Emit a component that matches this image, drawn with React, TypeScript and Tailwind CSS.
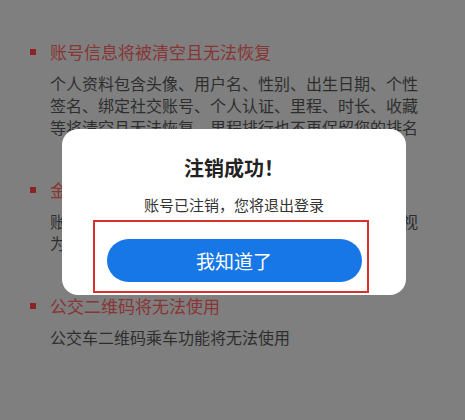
import React from "react";

type Section = {
  title: string;
  lines: string[];
};

const sections: Section[] = [
  {
    title: "账号信息将被清空且无法恢复",
    lines: [
      "个人资料包含头像、用户名、性别、出生日期、个性",
      "签名、绑定社交账号、个人认证、里程、时长、收藏",
      "等将清空且无法恢复，里程排行也不再保留您的排名",
    ],
  },
  {
    title: "金币等虚拟资产将被清空",
    lines: [
      "账号的余额、金币、优惠券等虚拟资产将被清空，视",
      "为您自动放弃",
    ],
  },
  {
    title: "公交二维码将无法使用",
    lines: ["公交车二维码乘车功能将无法使用"],
  },
];

function NoticeSection({ section }: { section: Section }) {
  return (
    <div className="flex flex-col">
      <div className="flex items-center">
        <span className="w-[6px] h-[6px] bg-[#8c2424] ml-[30px] mr-[14px]" />
        <span className="text-[17px] leading-[24px] text-[#873535]">
          {section.title}
        </span>
      </div>
      <div className="mt-[8px] pl-[50px] text-[16px] leading-[22px] text-[#2e2e2e]">
        {section.lines.map((line) => (
          <div key={line} className="whitespace-nowrap">
            {line}
          </div>
        ))}
      </div>
    </div>
  );
}

export default function App() {
  return (
    <div className="relative w-[465px] h-[420px] overflow-hidden bg-[#7f7f7f] font-['Noto_Sans_CJK_SC','Noto_Sans',sans-serif]">
      <div className="flex flex-col gap-[40px] pt-[40px]">
        {sections.map((s) => (
          <NoticeSection key={s.title} section={s} />
        ))}
      </div>

      {/* modal */}
      <div className="absolute left-[62px] top-[129px] w-[344px] h-[166px] rounded-[16px] bg-white flex flex-col items-center pt-[25px]">
        <div className="text-[20px] leading-[28px] font-bold text-[#222222]">
          注销成功！
        </div>
        <div className="mt-[12px] text-[15px] leading-[22px] text-[#333333]">
          账号已注销，您将退出登录
        </div>
        <button className="mt-[23px] w-[255px] h-[43px] rounded-full bg-[#1877e6] text-white text-[19px] leading-none">
          我知道了
        </button>
      </div>

      {/* annotation box */}
      <div className="absolute left-[93px] top-[220px] w-[276px] h-[73px] border-2 border-[#d8302c] pointer-events-none" />
    </div>
  );
}
